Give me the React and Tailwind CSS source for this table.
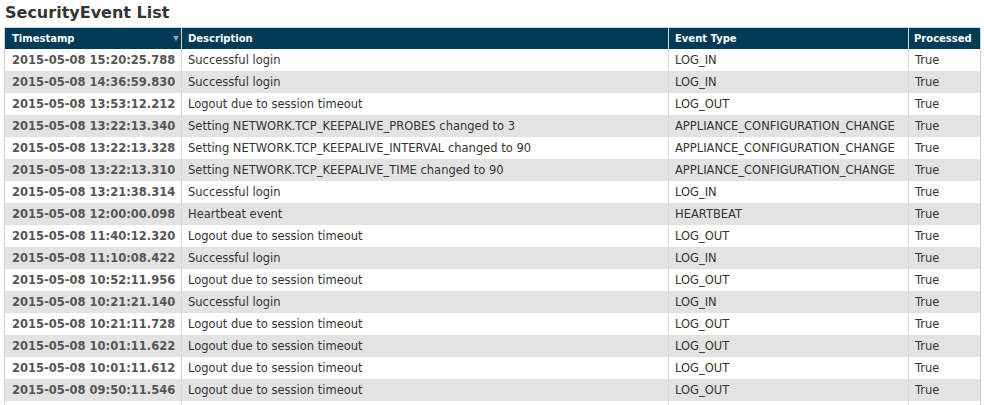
const rows = [
  ["2015-05-08 15:20:25.788", "Successful login", "LOG_IN"],
  ["2015-05-08 14:36:59.830", "Successful login", "LOG_IN"],
  ["2015-05-08 13:53:12.212", "Logout due to session timeout", "LOG_OUT"],
  ["2015-05-08 13:22:13.340", "Setting NETWORK.TCP_KEEPALIVE_PROBES changed to 3", "APPLIANCE_CONFIGURATION_CHANGE"],
  ["2015-05-08 13:22:13.328", "Setting NETWORK.TCP_KEEPALIVE_INTERVAL changed to 90", "APPLIANCE_CONFIGURATION_CHANGE"],
  ["2015-05-08 13:22:13.310", "Setting NETWORK.TCP_KEEPALIVE_TIME changed to 90", "APPLIANCE_CONFIGURATION_CHANGE"],
  ["2015-05-08 13:21:38.314", "Successful login", "LOG_IN"],
  ["2015-05-08 12:00:00.098", "Heartbeat event", "HEARTBEAT"],
  ["2015-05-08 11:40:12.320", "Logout due to session timeout", "LOG_OUT"],
  ["2015-05-08 11:10:08.422", "Successful login", "LOG_IN"],
  ["2015-05-08 10:52:11.956", "Logout due to session timeout", "LOG_OUT"],
  ["2015-05-08 10:21:21.140", "Successful login", "LOG_IN"],
  ["2015-05-08 10:21:11.728", "Logout due to session timeout", "LOG_OUT"],
  ["2015-05-08 10:01:11.622", "Logout due to session timeout", "LOG_OUT"],
  ["2015-05-08 10:01:11.612", "Logout due to session timeout", "LOG_OUT"],
  ["2015-05-08 09:50:11.546", "Logout due to session timeout", "LOG_OUT"],
];

export default function App() {
  return (
    <div className="w-[984px] h-[405px] overflow-hidden bg-white font-['DejaVu_Sans',Verdana,sans-serif]">
      <div className="h-[27px] pl-[5px] pt-[1px] text-[16px] font-bold leading-[24px] text-[#333]">
        SecurityEvent List
      </div>
      <div className="ml-[4px] w-[977px] border-x border-t border-[#d4d4d4]">
        <div className="flex h-[21px] bg-[#023b55] text-[10px] font-bold leading-[21px] text-white">
          <div className="relative w-[177px] border-r border-[#d4d4d4] pl-[7px]">
            Timestamp
            <span className="absolute right-[2px] top-[8px] h-0 w-0 border-x-[3.5px] border-t-[5px] border-x-transparent border-t-[#9aa7ae]" />
          </div>
          <div className="w-[487px] border-r border-[#d4d4d4] pl-[6px]">Description</div>
          <div className="w-[240px] border-r border-[#d4d4d4] pl-[6px]">Event Type</div>
          <div className="w-[71px] pl-[5px]">Processed</div>
        </div>
        {rows.map((r, i) => (
          <div
            key={i}
            className={`flex h-[22px] text-[11.5px] leading-[23px] text-[#333] ${i % 2 === 1 ? "bg-[#e3e3e3]" : "bg-white"}`}
          >
            <div className="w-[177px] border-r border-[#dadada] pl-[7px] font-bold text-[#555] whitespace-nowrap">{r[0]}</div>
            <div className="w-[487px] border-r border-[#dadada] pl-[6px] whitespace-nowrap">{r[1]}</div>
            <div className="w-[240px] border-r border-[#dadada] pl-[6px] whitespace-nowrap">{r[2]}</div>
            <div className="w-[71px] pl-[6px]">True</div>
          </div>
        ))}
        <div className="flex h-[22px] bg-white">
          <div className="w-[177px] border-r border-[#dadada]" />
          <div className="w-[487px] border-r border-[#dadada]" />
          <div className="w-[240px] border-r border-[#dadada]" />
          <div className="w-[71px]" />
        </div>
      </div>
    </div>
  );
}
